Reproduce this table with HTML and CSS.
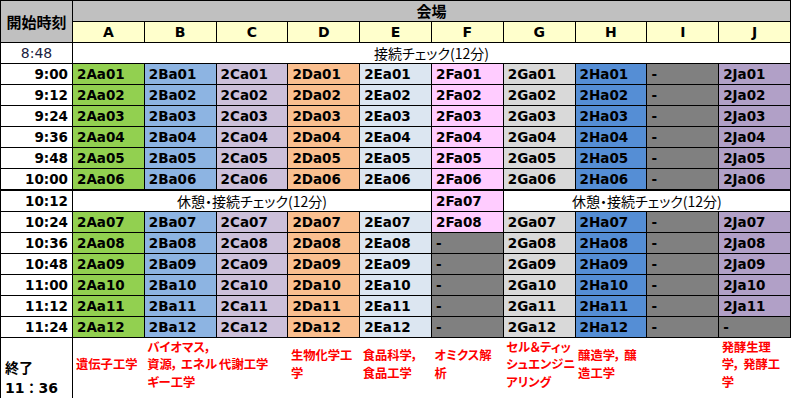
FILE: index.html
```html
<!DOCTYPE html>
<html lang="ja">
<head>
<meta charset="utf-8">
<link rel="stylesheet" href="styles.css">
</head>
<body>
<table class="sched">
  <colgroup>
    <col class="c-time">
    <col span="10">
  </colgroup>
  <tr class="row">
    <th class="hd-gray jp" rowspan="2">開始時刻</th>
    <th class="hd-gray jp" colspan="10">会場</th>
  </tr>
  <tr class="row">
    <th class="hd-yel">A</th><th class="hd-yel">B</th><th class="hd-yel">C</th><th class="hd-yel">D</th><th class="hd-yel">E</th>
    <th class="hd-yel">F</th><th class="hd-yel">G</th><th class="hd-yel">H</th><th class="hd-yel">I</th><th class="hd-yel">J</th>
  </tr>
  <tr class="row">
    <td class="t-first">8:48</td>
    <td class="brk jp" colspan="10">接続チェック(12分)</td>
  </tr>
  <tr class="row"><td class="t">9:00</td><td class="a">2Aa01</td><td class="b">2Ba01</td><td class="c">2Ca01</td><td class="d">2Da01</td><td class="e">2Ea01</td><td class="f">2Fa01</td><td class="g">2Ga01</td><td class="h">2Ha01</td><td class="x">-</td><td class="j">2Ja01</td></tr>
  <tr class="row"><td class="t">9:12</td><td class="a">2Aa02</td><td class="b">2Ba02</td><td class="c">2Ca02</td><td class="d">2Da02</td><td class="e">2Ea02</td><td class="f">2Fa02</td><td class="g">2Ga02</td><td class="h">2Ha02</td><td class="x">-</td><td class="j">2Ja02</td></tr>
  <tr class="row"><td class="t">9:24</td><td class="a">2Aa03</td><td class="b">2Ba03</td><td class="c">2Ca03</td><td class="d">2Da03</td><td class="e">2Ea03</td><td class="f">2Fa03</td><td class="g">2Ga03</td><td class="h">2Ha03</td><td class="x">-</td><td class="j">2Ja03</td></tr>
  <tr class="row"><td class="t">9:36</td><td class="a">2Aa04</td><td class="b">2Ba04</td><td class="c">2Ca04</td><td class="d">2Da04</td><td class="e">2Ea04</td><td class="f">2Fa04</td><td class="g">2Ga04</td><td class="h">2Ha04</td><td class="x">-</td><td class="j">2Ja04</td></tr>
  <tr class="row"><td class="t">9:48</td><td class="a">2Aa05</td><td class="b">2Ba05</td><td class="c">2Ca05</td><td class="d">2Da05</td><td class="e">2Ea05</td><td class="f">2Fa05</td><td class="g">2Ga05</td><td class="h">2Ha05</td><td class="x">-</td><td class="j">2Ja05</td></tr>
  <tr class="row thick"><td class="t">10:00</td><td class="a">2Aa06</td><td class="b">2Ba06</td><td class="c">2Ca06</td><td class="d">2Da06</td><td class="e">2Ea06</td><td class="f">2Fa06</td><td class="g">2Ga06</td><td class="h">2Ha06</td><td class="x">-</td><td class="j">2Ja06</td></tr>
  <tr class="row">
    <td class="t">10:12</td>
    <td class="brk jp" colspan="5">休憩・接続チェック(12分)</td>
    <td class="f">2Fa07</td>
    <td class="brk jp" colspan="4">休憩・接続チェック(12分)</td>
  </tr>
  <tr class="row"><td class="t">10:24</td><td class="a">2Aa07</td><td class="b">2Ba07</td><td class="c">2Ca07</td><td class="d">2Da07</td><td class="e">2Ea07</td><td class="f">2Fa08</td><td class="g">2Ga07</td><td class="h">2Ha07</td><td class="x">-</td><td class="j">2Ja07</td></tr>
  <tr class="row"><td class="t">10:36</td><td class="a">2Aa08</td><td class="b">2Ba08</td><td class="c">2Ca08</td><td class="d">2Da08</td><td class="e">2Ea08</td><td class="x">-</td><td class="g">2Ga08</td><td class="h">2Ha08</td><td class="x">-</td><td class="j">2Ja08</td></tr>
  <tr class="row"><td class="t">10:48</td><td class="a">2Aa09</td><td class="b">2Ba09</td><td class="c">2Ca09</td><td class="d">2Da09</td><td class="e">2Ea09</td><td class="x">-</td><td class="g">2Ga09</td><td class="h">2Ha09</td><td class="x">-</td><td class="j">2Ja09</td></tr>
  <tr class="row"><td class="t">11:00</td><td class="a">2Aa10</td><td class="b">2Ba10</td><td class="c">2Ca10</td><td class="d">2Da10</td><td class="e">2Ea10</td><td class="x">-</td><td class="g">2Ga10</td><td class="h">2Ha10</td><td class="x">-</td><td class="j">2Ja10</td></tr>
  <tr class="row"><td class="t">11:12</td><td class="a">2Aa11</td><td class="b">2Ba11</td><td class="c">2Ca11</td><td class="d">2Da11</td><td class="e">2Ea11</td><td class="x">-</td><td class="g">2Ga11</td><td class="h">2Ha11</td><td class="x">-</td><td class="j">2Ja11</td></tr>
  <tr class="row"><td class="t">11:24</td><td class="a">2Aa12</td><td class="b">2Ba12</td><td class="c">2Ca12</td><td class="d">2Da12</td><td class="e">2Ea12</td><td class="x">-</td><td class="g">2Ga12</td><td class="h">2Ha12</td><td class="x">-</td><td class="x">-</td></tr>
  <tr class="end-row">
    <td class="end">終了<br>11：36</td>
    <td class="lbl">遺伝子工学</td>
    <td class="lbl">バイオマス<span class="cm">，</span><br>資源<span class="cm">，</span>エネル<br>ギー工学</td>
    <td class="lbl">代謝工学</td>
    <td class="lbl">生物化学工<br>学</td>
    <td class="lbl">食品科学<span class="cm">，</span><br>食品工学</td>
    <td class="lbl">オミクス解<br>析</td>
    <td class="lbl">セル＆ティッ<br>シュエンジニ<br>アリング</td>
    <td class="lbl">醸造学<span class="cm">，</span>醸<br>造工学</td>
    <td class="lbl"></td>
    <td class="lbl">発酵生理<br>学<span class="cm">，</span>発酵工<br>学</td>
  </tr>
</table>
</body>
</html>
```

FILE: styles.css
```css
html, body {
  margin: 0;
  padding: 0;
  background: #ffffff;
}

body {
  font-family: "DejaVu Sans", "Noto Sans CJK JP", sans-serif;
  color: #000;
}

.sched {
  width: 791px;
  border-collapse: collapse;
  table-layout: fixed;
}

.c-time {
  width: 72px;
}

.sched th,
.sched td {
  border: 1px solid #000;
  padding: 0 4px;
  white-space: nowrap;
  overflow: hidden;
}

.row th,
.row td {
  height: 20px;
  line-height: 20px;
  font-size: 13.5px;
  font-weight: bold;
  text-align: left;
  vertical-align: middle;
}

.jp {
  font-family: "Noto Sans CJK JP", sans-serif;
  font-feature-settings: "palt";
}

.row .hd-gray {
  background: #c0c0c0;
  text-align: center;
  font-size: 15px;
}

.row .hd-yel {
  background: #ffffcc;
  text-align: center;
  font-size: 14px;
}

.row .t-first {
  text-align: center;
  font-weight: normal;
  font-size: 14px;
  color: #1c2240;
}

.row .t {
  text-align: right;
  padding-right: 4px;
}

.row .brk {
  text-align: center;
  font-weight: normal;
  font-size: 14px;
  background: #fff;
}

.thick td {
  border-bottom: 2px solid #000;
}

.a { background: #92d050; }
.b { background: #8db4e2; }
.c { background: #ccc0da; }
.d { background: #fabf8f; }
.e { background: #dce6f1; }
.f { background: #ffccff; }
.g { background: #d9d9d9; }
.h { background: #558ed5; }
.j { background: #b1a0c7; }
.x { background: #808080; }

.end-row td {
  height: 60px;
}

.sched .end {
  font-weight: bold;
  font-size: 14px;
  line-height: 20px;
  vertical-align: bottom;
  padding: 0 4px 1px 4px;
  font-family: "DejaVu Sans", "Noto Sans CJK JP", sans-serif;
}

.end-row .lbl {
  height: 52px;
}

.sched .lbl {
  border: none;
  color: #ff0000;
  font-weight: bold;
  font-size: 12.3px;
  line-height: 17.5px;
  vertical-align: middle;
  padding: 0 0 8px 3px;
  overflow: visible;
  font-family: "Noto Sans CJK JP", sans-serif;
  font-feature-settings: "palt";
}

.cm {
  margin-right: 3px;
}
```
